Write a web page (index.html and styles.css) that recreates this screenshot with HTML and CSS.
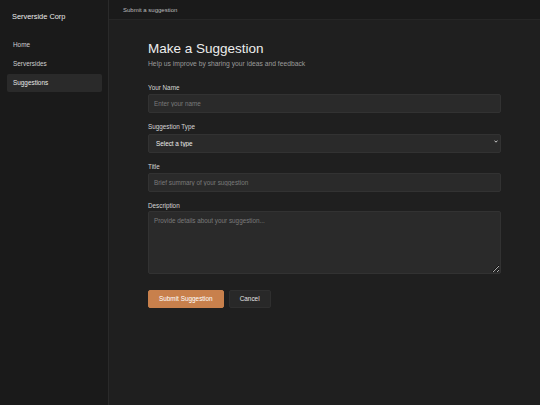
FILE: index.html
```html
<!DOCTYPE html>
<html lang="en">
<head>
<meta charset="utf-8">
<title>Submit a suggestion</title>
<link rel="stylesheet" href="styles.css">
</head>
<body>
<div class="app">
  <aside class="sidebar">
    <div class="brand">Serverside Corp</div>
    <nav class="nav">
      <a class="nav-item" href="#">Home</a>
      <a class="nav-item" href="#">Serversides</a>
      <a class="nav-item active" href="#">Suggestions</a>
    </nav>
  </aside>
  <div class="main">
    <header class="topbar">Submit a suggestion</header>
    <section class="content">
      <h1 class="title">Make a Suggestion</h1>
      <p class="subtitle">Help us improve by sharing your ideas and feedback</p>
      <form class="form">
        <div class="field">
          <label class="label">Your Name</label>
          <input class="input" type="text" placeholder="Enter your name">
        </div>
        <div class="field">
          <label class="label">Suggestion Type</label>
          <div class="select-wrap">
            <select class="input select">
              <option>Select a type</option>
            </select>
            <svg class="chevron" width="4" height="3" viewBox="0 0 4 3"><polyline points="0.5,0.6 2,2.2 3.5,0.6" fill="none" stroke="#d8d8d8" stroke-width="0.9"/></svg>
          </div>
        </div>
        <div class="field">
          <label class="label">Title</label>
          <input class="input" type="text" placeholder="Brief summary of your suggestion">
        </div>
        <div class="field">
          <label class="label">Description</label>
          <textarea class="input textarea" placeholder="Provide details about your suggestion..."></textarea>
        </div>
        <div class="actions">
          <button type="button" class="btn btn-primary">Submit Suggestion</button>
          <button type="button" class="btn btn-secondary">Cancel</button>
        </div>
      </form>
    </section>
  </div>
</div>
</body>
</html>
```

FILE: styles.css
```css
* { box-sizing: border-box; }
html, body {
  margin: 0;
  padding: 0;
  height: 100%;
  background: #1f1f1f;
  font-family: "Liberation Sans", Arial, sans-serif;
  color: #e6e6e6;
}
.app {
  display: flex;
  height: 405px;
}
.sidebar {
  width: 109px;
  flex: none;
  background: #1a1a1a;
  border-right: 1px solid #2a2a2a;
  padding: 11.5px 6px 0 7px;
}
.brand {
  font-size: 7.4px;
  line-height: 9px;
  color: #ececec;
  padding-left: 5px;
  margin-bottom: 15.5px;
}
.nav {
  display: flex;
  flex-direction: column;
  gap: 1.5px;
}
.nav-item {
  display: block;
  height: 17.5px;
  line-height: 17.5px;
  padding: 0 6px;
  font-size: 6.4px;
  color: #cfcfcf;
  text-decoration: none;
  border-radius: 2px;
}
.nav-item.active {
  background: #2a2a2a;
  color: #e8e8e8;
}
.main {
  flex: 1;
  display: flex;
  flex-direction: column;
  min-width: 0;
}
.topbar {
  height: 20px;
  flex: none;
  background: #1a1a1a;
  border-bottom: 1px solid #262626;
  display: flex;
  align-items: center;
  padding-left: 14px;
  font-size: 6px;
  color: #bdbdbd;
}
.content {
  width: 353px;
  margin: 0 auto;
  padding-top: 21px;
}
.title {
  margin: 0;
  font-size: 13.5px;
  line-height: 16px;
  font-weight: normal;
  color: #ededed;
}
.subtitle {
  margin: 2px 0 0;
  font-size: 6.75px;
  line-height: 9px;
  color: #9a9a9a;
}
.form {
  margin-top: 16.3px;
  display: flex;
  flex-direction: column;
}
.field {
  display: flex;
  flex-direction: column;
  margin-bottom: 10px;
}
.label {
  font-size: 6.33px;
  line-height: 8px;
  color: #d6d6d6;
  margin-bottom: 1.5px;
}
.input {
  width: 100%;
  height: 19px;
  background: #2a2a2a;
  border: 1px solid #323232;
  border-radius: 2px;
  padding: 0 5px;
  font-family: inherit;
  font-size: 6.33px;
  color: #e6e6e6;
  outline: none;
}
.input::placeholder {
  color: #7a7a7a;
}
.select-wrap {
  position: relative;
}
.select {
  appearance: none;
  -webkit-appearance: none;
  padding-left: 7px;
  color: #ececec;
}
.chevron {
  position: absolute;
  right: 3px;
  top: 8px;
}
.textarea {
  height: 63px;
  padding: 5px;
  resize: vertical;
  line-height: 8px;
}
.actions {
  display: flex;
  gap: 5px;
  margin-top: 5.5px;
}
.btn {
  height: 18px;
  border-radius: 2px;
  font-family: inherit;
  font-size: 6.4px;
  cursor: pointer;
}
.btn-primary {
  background: #c8804c;
  border: 1px solid #c8804c;
  color: #ffffff;
  padding: 0 10px;
}
.btn-secondary {
  background: #282828;
  border: 1px solid #2f2f2f;
  color: #e2e2e2;
  padding: 0 10px;
}
```
